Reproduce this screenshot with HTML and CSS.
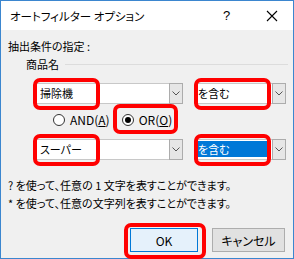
FILE: index.html
```html
<!DOCTYPE html>
<html lang="ja">
<head>
    <meta charset="UTF-8">
    <title>オートフィルター オプション</title>
    <link rel="stylesheet" href="styles.css">
</head>
<body>
<div class="dialog">
    <div class="titlebar">
        <span class="title">オートフィルター オプション</span>
        <span class="help">?</span>
        <svg class="close" width="12" height="12" viewBox="0 0 12 12"><path d="M1 1 L11 11 M11 1 L1 11" stroke="#000" stroke-width="1.1" fill="none"/></svg>
    </div>
    <div class="body">
        <div class="label-main">抽出条件の指定 :</div>
        <div class="group-head"><span>商品名</span><span class="rule"></span></div>

        <div class="row">
            <div class="combo wide">
                <div class="field">掃除機</div>
                <div class="drop"><svg width="8" height="5" viewBox="0 0 8 5"><path d="M0.5 0.5 L4 4 L7.5 0.5" stroke="#555" fill="none"/></svg></div>
                <span class="mark mark-field"></span>
            </div>
            <div class="combo narrow">
                <div class="field">を含む</div>
                <div class="drop"><svg width="8" height="5" viewBox="0 0 8 5"><path d="M0.5 0.5 L4 4 L7.5 0.5" stroke="#555" fill="none"/></svg></div>
                <span class="mark mark-op"></span>
            </div>
        </div>

        <div class="radios">
            <label class="radio"><span class="dot"></span>AND(<u>A</u>)</label>
            <label class="radio on"><span class="dot"></span>OR(<u>O</u>)<span class="mark mark-or"></span></label>
        </div>

        <div class="row">
            <div class="combo wide">
                <div class="field">スーパー</div>
                <div class="drop"><svg width="8" height="5" viewBox="0 0 8 5"><path d="M0.5 0.5 L4 4 L7.5 0.5" stroke="#555" fill="none"/></svg></div>
                <span class="mark mark-field"></span>
            </div>
            <div class="combo narrow">
                <div class="field"><span class="selected">を含む</span></div>
                <div class="drop"><svg width="8" height="5" viewBox="0 0 8 5"><path d="M0.5 0.5 L4 4 L7.5 0.5" stroke="#555" fill="none"/></svg></div>
                <span class="mark mark-op"></span>
            </div>
        </div>

        <p class="hint first">? を使って、任意の 1 文字を表すことができます。</p>
        <p class="hint">* を使って、任意の文字列を表すことができます。</p>

        <div class="buttons">
            <button class="btn default">OK<span class="mark mark-ok"></span></button>
            <button class="btn">キャンセル</button>
        </div>
    </div>
</div>
</body>
</html>
```

FILE: styles.css
```css
* { box-sizing: border-box; }
body { margin: 0; font-family: "Noto Sans CJK JP", "Noto Sans", sans-serif; font-size: 11px; color: #000; font-feature-settings: "palt"; }
.dialog { width: 294px; height: 259px; border: 1px solid #3b86cf; background: #f0f0f0; }

.titlebar { height: 29px; background: #fff; display: flex; align-items: center; padding: 0 0 0 9px; }
.title { flex: 1; line-height: 14px; font-size: 11.5px; }
.help { width: 10px; margin-right: 33px; font-family: "Liberation Sans", sans-serif; font-size: 13px; }
.close { margin-right: 15px; }

.body { padding: 0 0 0 7px; }
.label-main { margin-top: 9px; line-height: 14px; height: 14px; }
.group-head { margin-top: 4px; height: 14px; line-height: 14px; padding-left: 18px; display: flex; align-items: center; }
.group-head .rule { flex: 1; height: 1px; background: #dcdcdc; margin: 0 5px 0 6px; }

.row { display: flex; margin-top: 12px; padding-left: 28px; height: 21px; }
.row + .row { margin-top: 0; }
.combo { position: relative; display: flex; height: 21px; }
.combo.wide { width: 147px; }
.combo.narrow { width: 92px; margin-left: 11px; }
.field { flex: 1; background: #fff; border: 1px solid #c8c8c8; border-right: none; line-height: 19px; padding-left: 3px; white-space: nowrap; }
.drop { width: 14px; background: #e6e6e6; border: 1px solid #acacac; display: flex; align-items: center; justify-content: center; }
.selected { display: inline-block; background: #0078d7; color: #fff; line-height: 16px; width: 71px; padding-left: 1px; margin-left: -1px; }

.radios { display: flex; margin-top: 9px; margin-bottom: 10px; padding-left: 45px; height: 14px; line-height: 14px; font-size: 12px; }
.radio { position: relative; display: flex; align-items: center; margin-right: 12px; }
.radio u { text-decoration: underline; }
.dot { width: 12px; height: 12px; border: 1px solid #333; border-radius: 50%; background: #fff; margin-right: 5px; position: relative; }
.radio.on .dot::after { content: ""; position: absolute; left: 2px; top: 2px; width: 6px; height: 6px; border-radius: 50%; background: #000; }

.hint { margin: 4px 0 0; line-height: 14px; height: 14px; }
.hint.first { margin-top: 18px; }

.buttons { display: flex; justify-content: flex-end; gap: 14px; margin-top: 18px; padding-right: 8px; }
.btn { position: relative; height: 24px; width: 73px; font-family: inherit; font-size: 12px; font-feature-settings: "palt"; background: #e1e1e1; border: 1px solid #adadad; padding: 0; }
.btn.default { width: 68px; background: #e5f1fb; border-color: #0078d7; }

.mark { position: absolute; border: 4px solid #f00; border-radius: 7px; pointer-events: none; }
.mark-field { left: -3px; top: -5px; width: 67px; height: 32px; }
.mark-op { left: 0; top: -5px; width: 77px; height: 32px; }
.mark-or { left: -9px; top: -9px; width: 65px; height: 30px; }
.mark-ok { left: -7px; top: -6px; width: 82px; height: 36px; }
```
